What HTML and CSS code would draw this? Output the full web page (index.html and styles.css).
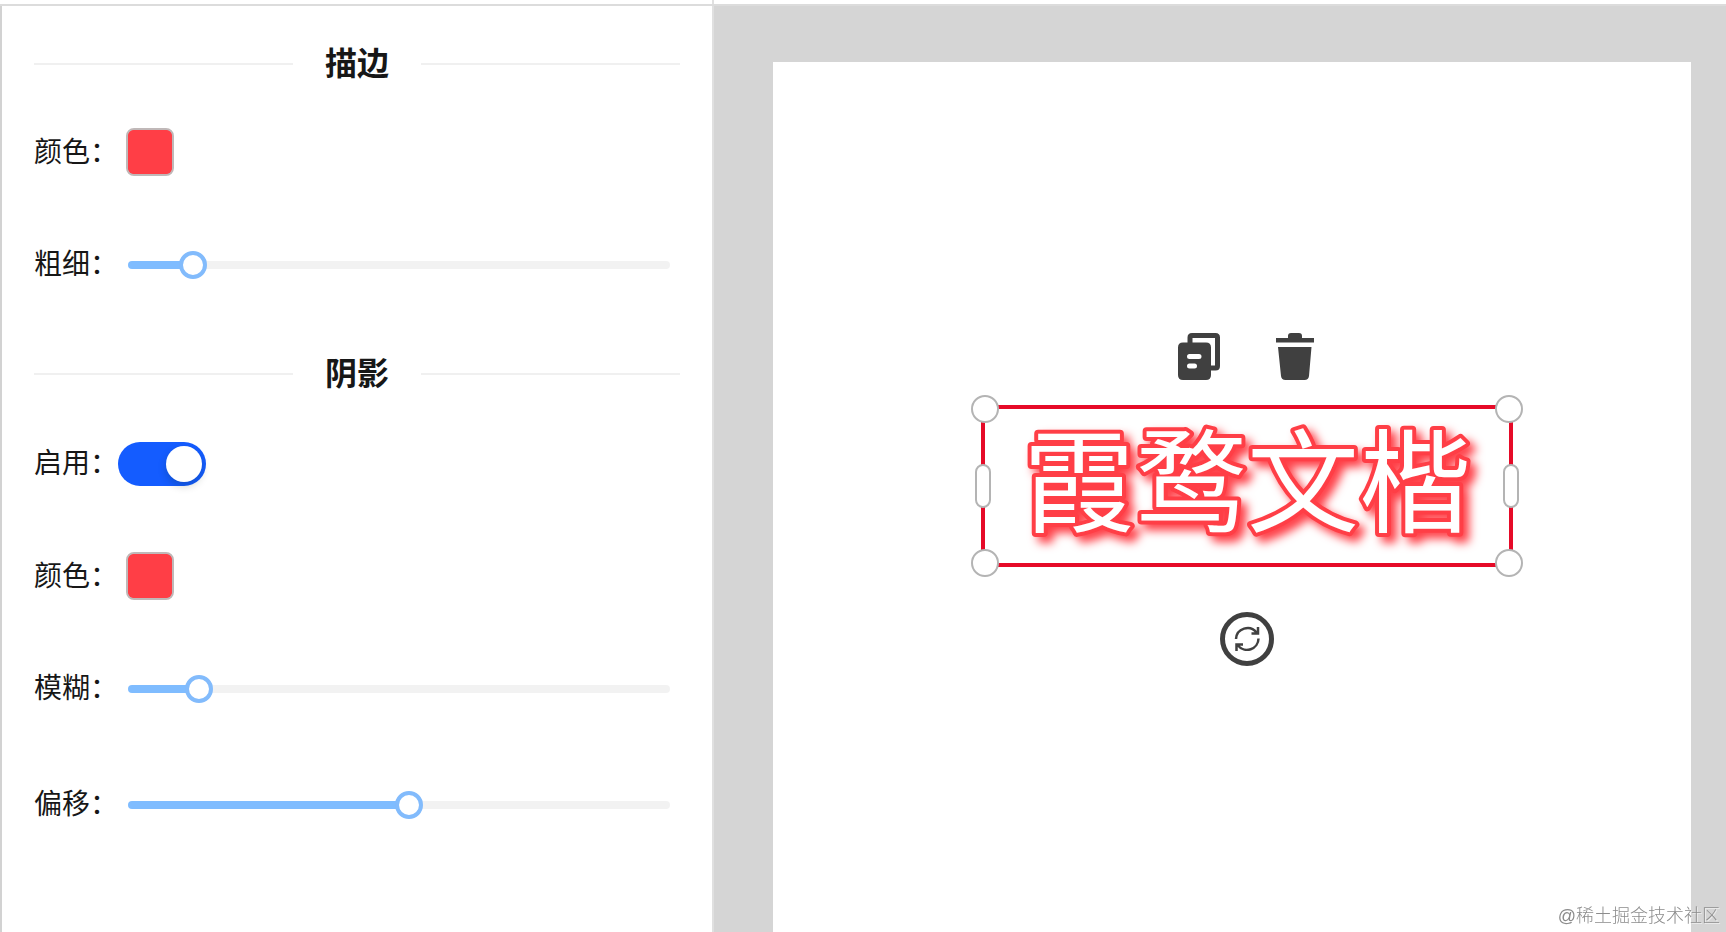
FILE: index.html
```html
<!DOCTYPE html>
<html lang="zh-CN">
<head>
<meta charset="utf-8">
<title>文字样式</title>
<link rel="stylesheet" href="styles.css">
</head>
<body>
<div class="editor">
  <header class="topbar"><div class="topbar-side"></div></header>
  <aside class="panel">
    <h2 class="divider">描边</h2>
    <div class="row">
      <label class="label" for="stroke-color">颜色：</label>
      <input class="swatch" id="stroke-color" type="color" value="#ff3e46">
    </div>
    <div class="row">
      <label class="label" for="stroke-width">粗细：</label>
      <input class="slider" id="stroke-width" type="range" min="0" max="100" value="10" style="--fill:12%">
    </div>
    <h2 class="divider">阴影</h2>
    <div class="row row-switch">
      <label class="label" for="shadow-on">启用：</label>
      <input class="switch" id="shadow-on" type="checkbox" role="switch" checked>
    </div>
    <div class="row">
      <label class="label" for="shadow-color">颜色：</label>
      <input class="swatch" id="shadow-color" type="color" value="#ff3e46">
    </div>
    <div class="row">
      <label class="label" for="shadow-blur">模糊：</label>
      <input class="slider" id="shadow-blur" type="range" min="0" max="100" value="11" style="--fill:13%">
    </div>
    <div class="row row-last">
      <label class="label" for="shadow-offset">偏移：</label>
      <input class="slider" id="shadow-offset" type="range" min="0" max="100" value="52" style="--fill:52%">
    </div>
  </aside>
  <main class="stage">
    <div class="canvas">
      <div class="selection">
        <svg class="art" width="524" height="154" viewBox="0 0 524 154">
          <text class="art-text" x="262" y="115" text-anchor="middle">霞鹜文楷</text>
        </svg>
        <div class="tools">
          <button class="tool" type="button" aria-label="复制">
            <svg width="42" height="48" viewBox="0 0 42 48">
              <path d="M12 10V4.500Q12 2.500 14 2.500H37.500Q39.500 2.500 39.500 4.500V33Q39.500 35 37.500 35H32" fill="none" stroke="#404040" stroke-width="5"/>
              <path fill-rule="evenodd" fill="#404040" d="M5 9.500H28Q33 9.500 33 14.500V42Q33 47 28 47H5Q0 47 0 42V14.500Q0 9.500 5 9.500ZM11.500 21A2.500 2.500 0 0 0 11.500 26H21A2.500 2.500 0 0 0 21 21ZM11.500 30.500A2.500 2.500 0 0 0 11.500 35.500H16.500A2.500 2.500 0 0 0 16.500 30.500Z"/>
            </svg>
          </button>
          <button class="tool" type="button" aria-label="删除">
            <svg width="38" height="48" viewBox="0 0 38 48">
              <path fill="#404040" d="M0 5H12V3Q12 0 15 0H23Q26 0 26 3V5H38V9.500H0ZM2 14H35.500L33 43Q32.500 47 28.500 47H9.500Q5.500 47 5 43Z"/>
            </svg>
          </button>
        </div>
        <button class="handle corner top left" type="button" aria-label="左上"></button>
        <button class="handle corner top right" type="button" aria-label="右上"></button>
        <button class="handle corner bottom left" type="button" aria-label="左下"></button>
        <button class="handle corner bottom right" type="button" aria-label="右下"></button>
        <button class="handle side left" type="button" aria-label="左"></button>
        <button class="handle side right" type="button" aria-label="右"></button>
        <button class="rotate" type="button" aria-label="旋转">
          <svg width="54" height="54" viewBox="0 0 54 54" fill="none" stroke="#404040">
            <circle cx="27" cy="27" r="24.500" stroke-width="5"/>
            <path stroke-width="2.500" d="M16 27A11.500 11.500 0 0 1 36.500 20.500M38 15V21.500H31.500M38.500 26.500A11.500 11.500 0 0 1 18 33.500M16.500 39V32.500H23"/>
          </svg>
        </button>
      </div>
    </div>
  </main>
</div>
<div class="watermark">@稀土掘金技术社区</div>
</body>
</html>
```
FILE: styles.css
```css
* { box-sizing: border-box; }

body {
  margin: 0;
  background: #fff;
  color: #171717;
  font-family: "Liberation Sans", "Noto Sans CJK SC", sans-serif;
}

button {
  padding: 0;
  border: 0;
  background: none;
  cursor: pointer;
}

svg { display: block; }

.editor {
  display: grid;
  grid-template-columns: 714fr 1012fr;
  grid-template-rows: 6px 1fr;
  height: 100vh;
  overflow: hidden;
}

.topbar {
  grid-column: 1 / -1;
  display: grid;
  grid-template-columns: 714fr 1012fr;
  border-bottom: 2px solid #dcdcdc;
}

.topbar-side { border-right: 2px solid #e0e0e0; }

.panel {
  padding: 4px 32px 0;
  border-left: 2px solid #d2d2d2;
  border-right: 2px solid #e0e0e0;
}

.divider {
  display: flex;
  align-items: center;
  gap: 32px;
  margin: 0;
  padding: 30px 0 8px;
  font-size: 32px;
  font-weight: 600;
  line-height: 48px;
}

.divider::before,
.divider::after {
  content: "";
  flex: 1;
  height: 2px;
  background: #f0f0f0;
}

.row {
  display: flex;
  align-items: center;
  height: 112px;
}

.row-switch { height: 114px; }
.row-last { margin-top: 4px; }

.label {
  width: 84px;
  padding-top: 2px;
  font-size: 28px;
  line-height: 40px;
  white-space: nowrap;
}

.swatch {
  appearance: none;
  width: 48px;
  height: 48px;
  margin: 0 8px;
  padding: 0;
  border: 2px solid #c0b8b8;
  border-radius: 8px;
  background: #ff3e46;
  overflow: hidden;
}

.swatch::-webkit-color-swatch-wrapper { padding: 0; }
.swatch::-webkit-color-swatch { border: 0; border-radius: 6px; }

.slider {
  appearance: none;
  flex: 1;
  min-width: 0;
  height: 28px;
  margin: 2px 10px 0;
  background: none;
}

.slider::-webkit-slider-runnable-track {
  height: 8px;
  border-radius: 4px;
  background: linear-gradient(to right, #7fbcff var(--fill), #f2f2f2 var(--fill));
}

.slider::-webkit-slider-thumb {
  appearance: none;
  width: 28px;
  height: 28px;
  margin-top: -10px;
  border: 4px solid #82bbfc;
  border-radius: 50%;
  background: #fff;
}

.switch {
  appearance: none;
  display: flex;
  justify-content: flex-end;
  width: 88px;
  height: 44px;
  margin: 2px 0 0;
  padding: 4px;
  border-radius: 22px;
  background: #145cff;
}

.switch::before {
  content: "";
  width: 36px;
  height: 36px;
  border-radius: 50%;
  background: #fff;
  box-shadow: 0 4px 8px rgba(0, 35, 11, 0.2);
}

.stage {
  display: flex;
  padding: 56px 35px 0 59px;
  background: #d5d5d5;
}

.canvas {
  position: relative;
  flex: 1;
  background: #fff;
}

.selection {
  position: absolute;
  left: 208px;
  top: 343px;
  width: 532px;
  border: 4px solid #e60a28;
}

.art {
  overflow: visible;
  filter: drop-shadow(6px 6px 5px #ff3e46);
}

.art-text {
  fill: #fff;
  stroke: #ff3e46;
  stroke-width: 8px;
  stroke-linejoin: round;
  paint-order: stroke fill;
  font-family: "LXGW WenKai", "KaiTi", "Noto Sans CJK SC", sans-serif;
  font-size: 112px;
}

.tools {
  position: absolute;
  left: 193px;
  bottom: 182px;
  display: flex;
  gap: 56px;
}

.handle {
  position: absolute;
  border: 2px solid #b4b4b4;
  background: #fff;
}

.corner {
  width: 28px;
  height: 28px;
  border-radius: 50%;
}

.corner.top { top: -14px; }
.corner.bottom { bottom: -14px; }
.corner.left { left: -14px; }
.corner.right { right: -14px; }

.side {
  top: 55px;
  width: 16px;
  height: 44px;
  border-radius: 8px;
}

.side.left { left: -10px; }
.side.right { right: -10px; }

.rotate {
  position: absolute;
  left: 235px;
  top: 203px;
}

.watermark {
  position: fixed;
  right: 6px;
  bottom: 4px;
  color: #8c8c8c;
  font-size: 18px;
  font-weight: 300;
  line-height: 24px;
  text-shadow: 1px 1px 0 rgba(255, 255, 255, 0.6);
}
```
